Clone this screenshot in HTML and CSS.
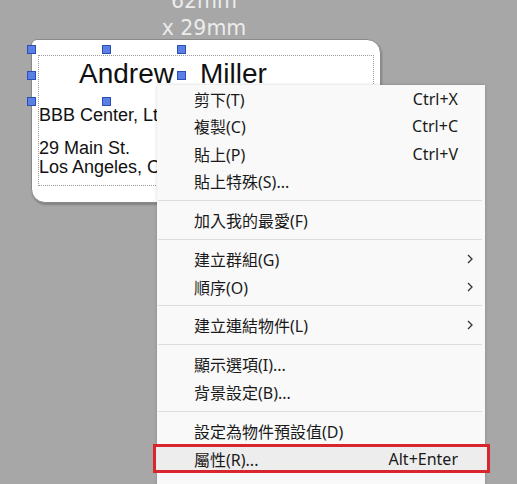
FILE: index.html
```html
<!DOCTYPE html>
<html lang="zh-Hant">
<head>
<meta charset="utf-8">
<title>Label editor</title>
<link rel="stylesheet" href="styles.css">
</head>
<body>
<div class="stage">
  <div class="dims">
    <div>62mm</div>
    <div>x 29mm</div>
  </div>

  <div class="label">
    <div class="label-frame">
      <div class="name"><span>Andrew</span><span class="last">Miller</span></div>
      <div class="company">BBB Center, Ltd.</div>
      <div class="addr">29 Main St.<br>Los Angeles, CA 90001</div>
    </div>
    <span class="handle h-tl"></span>
    <span class="handle h-tc"></span>
    <span class="handle h-tr"></span>
    <span class="handle h-ml"></span>
    <span class="handle h-mr"></span>
    <span class="handle h-bl"></span>
    <span class="handle h-bc"></span>
  </div>

  <div class="menu">
    <div class="item"><span class="text">剪下(T)</span><span class="key">Ctrl+X</span><span class="sub"></span></div>
    <div class="item"><span class="text">複製(C)</span><span class="key">Ctrl+C</span><span class="sub"></span></div>
    <div class="item"><span class="text">貼上(P)</span><span class="key">Ctrl+V</span><span class="sub"></span></div>
    <div class="item"><span class="text">貼上特殊(S)...</span><span class="sub"></span></div>
    <div class="sep"></div>
    <div class="item"><span class="text">加入我的最愛(F)</span><span class="sub"></span></div>
    <div class="sep"></div>
    <div class="item"><span class="text">建立群組(G)</span><span class="sub"><svg width="6" height="10" viewBox="0 0 6 10"><path d="M1 1 L5 5 L1 9" fill="none" stroke="#333" stroke-width="1.3"/></svg></span></div>
    <div class="item"><span class="text">順序(O)</span><span class="sub"><svg width="6" height="10" viewBox="0 0 6 10"><path d="M1 1 L5 5 L1 9" fill="none" stroke="#333" stroke-width="1.3"/></svg></span></div>
    <div class="sep"></div>
    <div class="item"><span class="text">建立連結物件(L)</span><span class="sub"><svg width="6" height="10" viewBox="0 0 6 10"><path d="M1 1 L5 5 L1 9" fill="none" stroke="#333" stroke-width="1.3"/></svg></span></div>
    <div class="sep"></div>
    <div class="item"><span class="text">顯示選項(I)...</span><span class="sub"></span></div>
    <div class="item"><span class="text">背景設定(B)...</span><span class="sub"></span></div>
    <div class="sep"></div>
    <div class="item"><span class="text">設定為物件預設值(D)</span><span class="sub"></span></div>
    <div class="item active"><span class="text">屬性(R)...</span><span class="key">Alt+Enter</span><span class="sub"></span></div>
  </div>
</div>
</body>
</html>
```

FILE: styles.css
```css
* { box-sizing: border-box; }

html, body {
  margin: 0;
  padding: 0;
}

body {
  background: #a7a7a7;
  width: 517px;
  height: 484px;
  overflow: hidden;
}

.stage {
  position: relative;
  width: 517px;
  height: 484px;
  overflow: hidden;
}

.dims {
  position: absolute;
  left: 104px;
  top: -12.5px;
  width: 200px;
  text-align: center;
  font-family: "DejaVu Sans", sans-serif;
  font-size: 20.5px;
  line-height: 27px;
  color: #ececec;
}

.label {
  position: absolute;
  left: 31px;
  top: 39px;
  width: 350px;
  height: 164px;
  background: #ffffff;
  border: 1px solid #8a8a8a;
  border-radius: 6px 14px 14px 14px;
  box-shadow: 1px 2px 2px rgba(0, 0, 0, 0.22);
  padding: 15px 0 0 6px;
  font-family: "Liberation Sans", Arial, sans-serif;
  color: #111;
}

.label-frame {
  width: 336px;
  height: 131px;
  border: 1px dotted #9a9a9a;
  padding-top: 1.7px;
  white-space: nowrap;
}

.name {
  font-size: 28px;
  line-height: 32px;
  padding-left: 40px;
}

.name .last {
  margin-left: 26px;
}

.company {
  font-size: 18px;
  line-height: 20px;
  margin-top: 15px;
}

.addr {
  font-size: 18px;
  line-height: 19px;
  margin-top: 14.5px;
}

.handle {
  position: absolute;
  width: 9px;
  height: 9px;
  background: #5a80e4;
  border: 1px solid #2c4fb6;
}

.h-tl { left: -5px; top: 5px; }
.h-tc { left: 70px; top: 5px; }
.h-tr { left: 145px; top: 5px; }
.h-ml { left: -5px; top: 31px; }
.h-mr { left: 145px; top: 31px; }
.h-bl { left: -5px; top: 57px; }
.h-bc { left: 70px; top: 57px; }

.menu {
  position: absolute;
  left: 157px;
  top: 85px;
  width: 328px;
  height: 410px;
  background: #f9f9f9;
  box-shadow: 0 0 3px rgba(0, 0, 0, 0.18);
  font-family: "Noto Sans", "Noto Sans CJK TC", sans-serif;
  font-size: 16px;
  color: #1a1a1a;
}

.item {
  display: flex;
  align-items: center;
  height: 27.5px;
  padding: 0 12px 0 37px;
  white-space: nowrap;
}

.text {
  flex: 1;
}

.sub {
  width: 15px;
  display: flex;
  justify-content: flex-end;
  align-items: center;
}

.sep {
  height: 11.4px;
  display: flex;
  align-items: center;
  padding: 0 3px 0 1px;
}

.sep::before {
  content: "";
  flex: 1;
  height: 1px;
  background: #dcdcdc;
}

.item.active {
  height: 29px;
  margin: 0 -5px 0 -4px;
  border: 3px solid #d8262f;
  background: #ededed;
  padding: 0 14px 0 38px;
}
```
